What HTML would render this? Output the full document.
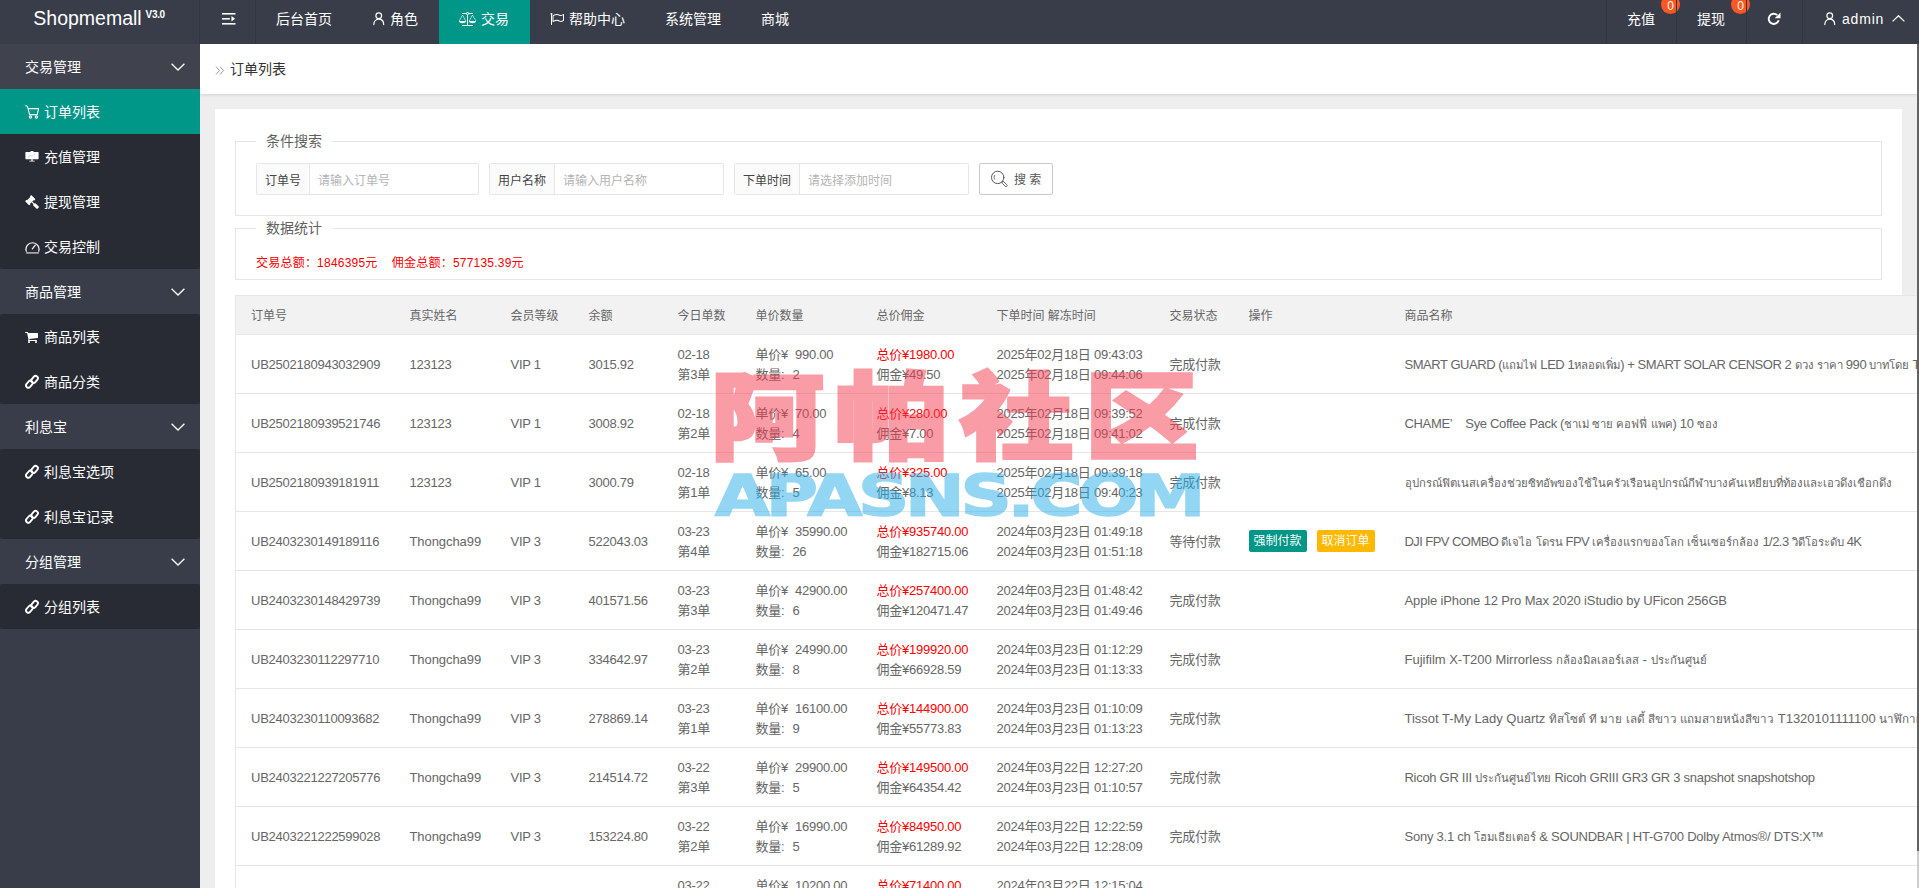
<!DOCTYPE html>
<html lang="zh-CN">
<head>
<meta charset="utf-8">
<title>Shopmemall</title>
<style>
*{box-sizing:border-box;margin:0;padding:0}
html,body{width:1919px;height:888px;overflow:hidden}
body{position:relative;background:#eeeeee;color:#333;font-family:"Liberation Sans","Noto Sans CJK SC",sans-serif;font-size:14px;line-height:24px}
svg{display:block}
/* header */
#hd{position:absolute;left:0;top:0;width:1919px;height:44px;background:#393d49;color:#fff;z-index:10}
#logo{position:absolute;left:0;top:0;width:200px;padding-left:33.300px;height:44px;text-align:left;white-space:nowrap;line-height:37px;font-size:19.5px;color:#fff;letter-spacing:0}
#logo sup{font-size:10px;letter-spacing:-.35px;position:relative;top:-.300px;font-weight:bold;vertical-align:top;line-height:30px;display:inline-block;margin-left:-1.500px}
.nv{position:absolute;top:0;height:44px;line-height:38px;font-size:14px;color:#fff;white-space:nowrap}
.nv svg{position:absolute}
.nv.on{background:#009688}
.vl{position:absolute;top:0;width:1px;height:44px;background:#323642}
.bdg{position:absolute;top:-5px;width:19px;height:19px;border-radius:10px;background:#ff5722;color:#fff;font-size:12px;line-height:22px;text-align:center}
/* side */
#sd{position:absolute;left:0;top:44px;width:200px;height:844px;background:#393d49;color:#fff}
.sg{position:relative;height:45px;line-height:47px;padding-left:25px;font-size:14px;color:#fff}
.sg svg{position:absolute;left:171px;top:19.300px}
.sc{background:#282b33;border-radius:2px}
.si{position:relative;height:45px;line-height:47px;padding-left:44px;font-size:14px;color:#fff}
.si.on{background:#009688}

/* breadcrumb */
#bc{position:absolute;left:200px;top:44px;width:1717px;height:50px;background:#fff;box-shadow:0 1px 3px rgba(0,0,0,.12);font-size:14px;line-height:51px;color:#333}
#bc span{position:absolute;left:30px;top:0}
#bc svg{position:absolute;left:15px;top:21.800px}
/* card */
#cd{position:absolute;left:215px;top:109px;width:1687px;height:800px;background:#fff}
.fs{position:absolute;left:235px;width:1647px;border:1px solid #e6e6e6}
.lg{position:absolute;left:20px;top:-13px;height:24px;line-height:25px;padding:0 10px;background:#fff;font-size:14px;color:#606060}
.ig{position:absolute;top:163px;height:32px;border:1px solid #e6e6e6;border-radius:2px;background:#fff;font-size:12px;line-height:34px}
.ig b{position:absolute;left:0;top:0;height:30px;font-weight:normal;background:#fbfbfb;border-right:1px solid #e6e6e6;padding:0 8px;color:#444}
.ig i{position:absolute;top:0;font-style:normal;color:#b4b4b4}
#sb{position:absolute;left:979px;top:163px;width:74px;height:32px;border:1px solid #c9c9c9;border-radius:2px;background:#fff;font-size:12px;line-height:32px;color:#555}
#st{position:absolute;left:256px;top:251px;font-size:12px;line-height:24px;letter-spacing:.22px;color:#ff0000;white-space:pre}
/* table */
#tb{position:absolute;left:235px;top:295px;border-collapse:collapse;table-layout:fixed;width:1900px;background:#fff;color:#666;font-size:13px}
#tb th,#tb td{border:1px solid #e6e6e6;border-left:0;border-right:0;padding:10px 15px 8px;letter-spacing:-.25px;line-height:20px;text-align:left;font-weight:normal;white-space:nowrap;overflow:hidden;vertical-align:middle;height:59px}
#tb th{background:#f2f2f2;height:39px;font-size:12px;letter-spacing:0}
#tb{border-left:1px solid #e6e6e6}
#tb .r{color:#ff0000}
.bt{display:inline-block;position:relative;top:-1px;height:22px;line-height:22px;padding:0 5px;font-size:12px;letter-spacing:0;color:#fff;border-radius:2px;vertical-align:middle}
.g1{display:inline-block;width:7px}.g2{display:inline-block;width:8px}
#tb td.th{letter-spacing:-.12px}
.t{font-size:11.3px;letter-spacing:0}
#tb td.n{letter-spacing:-.07px}
/* watermark */
#wm1{position:absolute;left:710px;top:336px;font-family:"Noto Sans CJK SC",sans-serif;font-weight:900;font-size:95px;line-height:150px;letter-spacing:9px;color:#f53c50;-webkit-text-stroke:3px #f53c50;opacity:.5;transform:scaleX(1.2);transform-origin:0 0;white-space:nowrap;z-index:5}
#wm2{position:absolute;left:715px;top:452px;font-family:"DejaVu Sans","Liberation Sans",sans-serif;font-weight:bold;font-size:57.5px;line-height:90px;letter-spacing:-3.5px;color:#28afeb;-webkit-text-stroke:1.5px #28afeb;opacity:.5;transform:scaleX(1.24);transform-origin:0 0;white-space:nowrap;z-index:5}
/* scrollbar */
#sbr{position:absolute;left:1917px;top:44px;width:2px;height:844px;background:#cdcdcd;z-index:20}
#sbr div{width:2px;height:806.500px;background:#636363}
</style>
</head>
<body>
<div id="cd"></div>
<div id="bc"><svg width="9" height="9" viewBox="0 0 9 9" fill="none" stroke="#999" stroke-width="1"><path d="M1 0.5 4.5 4.5 1 8.5M5 0.5 8.5 4.5 5 8.5"/></svg><span>订单列表</span></div>

<div class="fs" style="top:141px;height:75px"><div class="lg">条件搜索</div></div>
<div class="fs" style="top:228px;height:52px"><div class="lg">数据统计</div></div>
<div class="ig" style="left:256px;width:223px"><b>订单号</b><i style="left:61px">请输入订单号</i></div>
<div class="ig" style="left:489px;width:235px"><b>用户名称</b><i style="left:73px">请输入用户名称</i></div>
<div class="ig" style="left:734px;width:235px"><b>下单时间</b><i style="left:73px">请选择添加时间</i></div>
<div id="sb"><svg style="position:absolute;left:10px;top:6px" width="18" height="17" viewBox="0 0 18 17" fill="none" stroke="#555" stroke-width="1" stroke-linecap="round"><circle cx="7.700" cy="7.400" r="6.200"/><path d="M4.600 5.300A3.400 3.400 0 0 0 4.600 9.300" stroke-width=".8"/><rect x="-1.100" y="0" width="2.200" height="6.400" rx="1.100" transform="translate(12.300 11.800) rotate(-45)" stroke-width=".9"/></svg><span style="position:absolute;left:34px;top:0">搜 索</span></div>
<div id="st">交易总额：1846395元    佣金总额：577135.39元</div>

<table id="tb">
<colgroup><col style="width:159px"><col style="width:101px"><col style="width:78px"><col style="width:89px"><col style="width:78px"><col style="width:121px"><col style="width:120px"><col style="width:173px"><col style="width:79px"><col style="width:156px"><col></colgroup>
<tr><th>订单号</th><th>真实姓名</th><th>会员等级</th><th>余额</th><th>今日单数</th><th>单价数量</th><th>总价佣金</th><th>下单时间 解冻时间</th><th>交易状态</th><th>操作</th><th>商品名称</th></tr>
<tr><td>UB2502180943032909</td><td>123123</td><td>VIP 1</td><td>3015.92</td><td>02-18<br>第3单</td><td>单价¥<span class="g1"></span>990.00<br>数量:<span class="g2"></span>2</td><td><span class="r">总价¥1980.00</span><br>佣金¥49.50</td><td>2025年02月18日 09:43:03<br>2025年02月18日 09:44:06</td><td>完成付款</td><td></td><td class="th" style="letter-spacing:-0.45px">SMART GUARD (<span class="t">แถมไฟ</span> LED 1<span class="t">หลอดเพิ่ม</span>) + SMART SOLAR CENSOR 2 <span class="t">ดวง ราคา</span> 990 <span class="t">บาทโดย</span> TV Direct</td></tr>
<tr><td>UB2502180939521746</td><td>123123</td><td>VIP 1</td><td>3008.92</td><td>02-18<br>第2单</td><td>单价¥<span class="g1"></span>70.00<br>数量:<span class="g2"></span>4</td><td><span class="r">总价¥280.00</span><br>佣金¥7.00</td><td>2025年02月18日 09:39:52<br>2025年02月18日 09:41:02</td><td>完成付款</td><td></td><td class="th" style="letter-spacing:-0.338px">CHAME’<span style="display:inline-block;width:13px"></span>Sye Coffee Pack (<span class="t">ชาเม่ ซาย คอฟฟี่ แพค</span>) 10 <span class="t">ซอง</span></td></tr>
<tr><td>UB2502180939181911</td><td>123123</td><td>VIP 1</td><td>3000.79</td><td>02-18<br>第1单</td><td>单价¥<span class="g1"></span>65.00<br>数量:<span class="g2"></span>5</td><td><span class="r">总价¥325.00</span><br>佣金¥8.13</td><td>2025年02月18日 09:39:18<br>2025年02月18日 09:40:23</td><td>完成付款</td><td></td><td class="th"><span class="t">อุปกรณ์ฟิตเนสเครื่องช่วยซิทอัพของใช้ในครัวเรือนอุปกรณ์กีฬาบางคันเหยียบที่ท้องและเอวดึงเชือกดึง</span></td></tr>
<tr><td>UB2403230149189116</td><td class="n">Thongcha99</td><td>VIP 3</td><td>522043.03</td><td>03-23<br>第4单</td><td>单价¥<span class="g1"></span>35990.00<br>数量:<span class="g2"></span>26</td><td><span class="r">总价¥935740.00</span><br>佣金¥182715.06</td><td>2024年03月23日 01:49:18<br>2024年03月23日 01:51:18</td><td>等待付款</td><td><span class="bt" style="background:#009688">强制付款</span><span class="bt" style="background:#ffb800;margin-left:10px">取消订单</span></td><td class="th" style="letter-spacing:-0.56px">DJI FPV COMBO <span class="t">ดีเจไอ โดรน</span> FPV <span class="t">เครื่องแรกของโลก เซ็นเซอร์กล้อง</span> 1/2.3 <span class="t">วิดีโอระดับ</span> 4K</td></tr>
<tr><td>UB2403230148429739</td><td class="n">Thongcha99</td><td>VIP 3</td><td>401571.56</td><td>03-23<br>第3单</td><td>单价¥<span class="g1"></span>42900.00<br>数量:<span class="g2"></span>6</td><td><span class="r">总价¥257400.00</span><br>佣金¥120471.47</td><td>2024年03月23日 01:48:42<br>2024年03月23日 01:49:46</td><td>完成付款</td><td></td><td class="th" style="letter-spacing:-0.137px">Apple iPhone 12 Pro Max 2020 iStudio by UFicon 256GB</td></tr>
<tr><td>UB2403230112297710</td><td class="n">Thongcha99</td><td>VIP 3</td><td>334642.97</td><td>03-23<br>第2单</td><td>单价¥<span class="g1"></span>24990.00<br>数量:<span class="g2"></span>8</td><td><span class="r">总价¥199920.00</span><br>佣金¥66928.59</td><td>2024年03月23日 01:12:29<br>2024年03月23日 01:13:33</td><td>完成付款</td><td></td><td class="th" style="letter-spacing:-0.008px">Fujifilm X-T200 Mirrorless <span class="t">กล้องมิลเลอร์เลส</span> - <span class="t">ประกันศูนย์</span></td></tr>
<tr><td>UB2403230110093682</td><td class="n">Thongcha99</td><td>VIP 3</td><td>278869.14</td><td>03-23<br>第1单</td><td>单价¥<span class="g1"></span>16100.00<br>数量:<span class="g2"></span>9</td><td><span class="r">总价¥144900.00</span><br>佣金¥55773.83</td><td>2024年03月23日 01:10:09<br>2024年03月23日 01:13:23</td><td>完成付款</td><td></td><td class="th" style="letter-spacing:0">Tissot T-My Lady Quartz <span class="t" style="font-size:11.600px">ทิสโซต์ ที มาย เลดี้ สีขาว แถมสายหนังสีขาว</span> T1320101111100 <span class="t" style="font-size:11.600px">นาฬิกาผู้หญิง</span></td></tr>
<tr><td>UB2403221227205776</td><td class="n">Thongcha99</td><td>VIP 3</td><td>214514.72</td><td>03-22<br>第3单</td><td>单价¥<span class="g1"></span>29900.00<br>数量:<span class="g2"></span>5</td><td><span class="r">总价¥149500.00</span><br>佣金¥64354.42</td><td>2024年03月22日 12:27:20<br>2024年03月23日 01:10:57</td><td>完成付款</td><td></td><td class="th" style="letter-spacing:-0.288px">Ricoh GR III <span class="t">ประกันศูนย์ไทย</span> Ricoh GRIII GR3 GR 3 snapshot snapshotshop</td></tr>
<tr><td>UB2403221222599028</td><td class="n">Thongcha99</td><td>VIP 3</td><td>153224.80</td><td>03-22<br>第2单</td><td>单价¥<span class="g1"></span>16990.00<br>数量:<span class="g2"></span>5</td><td><span class="r">总价¥84950.00</span><br>佣金¥61289.92</td><td>2024年03月22日 12:22:59<br>2024年03月22日 12:28:09</td><td>完成付款</td><td></td><td class="th" style="letter-spacing:-0.238px">Sony 3.1 ch <span class="t">โฮมเธียเตอร์</span> &amp; SOUNDBAR | HT-G700 Dolby Atmos®/ DTS:X™</td></tr>
<tr><td>UB2403221215046351</td><td class="n">Thongcha99</td><td>VIP 3</td><td>91934.88</td><td>03-22<br>第1单</td><td>单价¥<span class="g1"></span>10200.00<br>数量:<span class="g2"></span>7</td><td><span class="r">总价¥71400.00</span><br>佣金¥30645.04</td><td>2024年03月22日 12:15:04<br>2024年03月22日 12:20:31</td><td>完成付款</td><td></td><td class="th"><span class="t">กล้องฟิล์ม</span> Instax Mini 11</td></tr>
</table>

<div id="wm1">阿帕社区</div>
<div id="wm2">APASNS.COM</div>

<div id="sd">
<div class="sg" style="background:#40424e">交易管理<svg class="cv" width="14" height="8" viewBox="0 0 14 8" fill="none" stroke="#fff" stroke-width="1.300"><path d="M0.600 0.700 7 7 13.400 0.700"/></svg></div>
<div class="sc"><div class="si on"><svg style="position:absolute;left:25px;top:16px" width="15" height="14" viewBox="0 0 15 14" fill="none" stroke="#fff" stroke-width="1.1" stroke-linejoin="round" stroke-linecap="round"><path d="M0.6 0.8 2.4 1.2 4.6 9.6H12.2L13.6 3.6H3.2"/><circle cx="5.4" cy="12" r="1.1"/><circle cx="11.4" cy="12" r="1.1"/></svg>订单列表</div><div class="si"><svg style="position:absolute;left:25px;top:17px" width="14" height="11" viewBox="0 0 14 11"><path fill="#fff" d="M5.5 0h3v1H13a.6.6 0 0 1 .6.6V7.6A.6.6 0 0 1 13 8.2H7.6v1.5h2v.9h-5.2v-.9h2V8.2H1A.6.6 0 0 1 .4 7.600V1.600A.6.6 0 0 1 1 1h4.500z"/><path d="M3 6.200 5.200 4.400 7 5.200 10.600 2.800" fill="none" stroke="#c9cbd0" stroke-width=".7"/></svg>充值管理</div><div class="si"><svg style="position:absolute;left:25px;top:15.5px;overflow:visible" width="14" height="14" viewBox="0 0 1792 1792"><path fill="#fff" transform="translate(0,1536) scale(1,-1)" d="M1771 0Q1771 -53 1734 -90L1627 -198Q1588 -235 1536 -235Q1483 -235 1446 -198L1083 166Q1045 202 1045 256Q1045 309 1088 352L832 608L706 482Q692 468 672.0 468.0Q652 468 638 482Q640 480 650.5 470.0Q661 460 663.0 457.0Q665 454 673.0 445.5Q681 437 683.0 432.0Q685 427 689.0 418.5Q693 410 694.5 402.0Q696 394 696 384Q696 346 668 316Q665 313 651.5 298.0Q638 283 632.5 277.5Q627 272 614.0 261.0Q601 250 592.0 245.5Q583 241 570.0 236.5Q557 232 544 232Q504 232 476 260L68 668Q40 696 40 736Q40 749 44.5 762.0Q49 775 53.5 784.0Q58 793 69.0 806.0Q80 819 85.5 824.5Q91 830 106.0 843.5Q121 857 124 860Q154 888 192 888Q202 888 210.0 886.5Q218 885 226.5 881.0Q235 877 240.0 875.0Q245 873 253.5 865.0Q262 857 265.0 855.0Q268 853 278.0 842.5Q288 832 290 830Q276 844 276.0 864.0Q276 884 290 898L638 1246Q652 1260 672.0 1260.0Q692 1260 706 1246Q704 1248 693.5 1258.0Q683 1268 681.0 1271.0Q679 1274 671.0 1282.5Q663 1291 661.0 1296.0Q659 1301 655.0 1309.5Q651 1318 649.5 1326.0Q648 1334 648 1344Q648 1382 676 1412Q679 1415 692.5 1430.0Q706 1445 711.5 1450.5Q717 1456 730.0 1467.0Q743 1478 752.0 1482.5Q761 1487 774.0 1491.5Q787 1496 800 1496Q840 1496 868 1468L1276 1060Q1304 1032 1304 992Q1304 979 1299.5 966.0Q1295 953 1290.5 944.0Q1286 935 1275.0 922.0Q1264 909 1258.5 903.5Q1253 898 1238.0 884.5Q1223 871 1220 868Q1190 840 1152 840Q1142 840 1134.0 841.5Q1126 843 1117.5 847.0Q1109 851 1104.0 853.0Q1099 855 1090.5 863.0Q1082 871 1079.0 873.0Q1076 875 1066.0 885.5Q1056 896 1054 898Q1068 884 1068.0 864.0Q1068 844 1054 830L928 704L1184 448Q1227 491 1280 491Q1332 491 1371 454L1734 91Q1771 52 1771 0Z"/></svg>提现管理</div><div class="si"><svg style="position:absolute;left:25px;top:15.500px" width="15" height="14" viewBox="0 0 15 14" fill="none" stroke="#fff" stroke-width="1.200" stroke-linecap="round"><path d="M1.300 11.200A6.500 6.500 0 1 1 13.700 11.200"/><path d="M7.300 8.800 10.300 5.200"/><path d="M1.100 12.900H13.900" stroke="#c5c6cb" stroke-width="1.400" stroke-linecap="butt"/></svg>交易控制</div></div>
<div class="sg">商品管理<svg class="cv" width="14" height="8" viewBox="0 0 14 8" fill="none" stroke="#fff" stroke-width="1.300"><path d="M0.600 0.700 7 7 13.400 0.700"/></svg></div>
<div class="sc"><div class="si"><svg style="position:absolute;left:25px;top:15.5px;overflow:visible" width="14" height="14" viewBox="0 0 1792 1792"><path fill="#fff" transform="translate(0,1536) scale(1,-1)" d="M602.0 90.0Q640 52 640.0 0.0Q640 -52 602.0 -90.0Q564 -128 512.0 -128.0Q460 -128 422.0 -90.0Q384 -52 384.0 0.0Q384 52 422.0 90.0Q460 128 512.0 128.0Q564 128 602.0 90.0ZM1498.0 90.0Q1536 52 1536.0 0.0Q1536 -52 1498.0 -90.0Q1460 -128 1408.0 -128.0Q1356 -128 1318.0 -90.0Q1280 -52 1280.0 0.0Q1280 52 1318.0 90.0Q1356 128 1408.0 128.0Q1460 128 1498.0 90.0ZM1664 1088V576Q1664 552 1647.5 533.5Q1631 515 1607 512L563 390Q576 330 576 320Q576 304 552 256H1472Q1498 256 1517.0 237.0Q1536 218 1536.0 192.0Q1536 166 1517.0 147.0Q1498 128 1472 128H448Q422 128 403.0 147.0Q384 166 384 192Q384 203 392.0 223.5Q400 244 408.0 259.5Q416 275 429.5 299.5Q443 324 445 329L268 1152H64Q38 1152 19.0 1171.0Q0 1190 0.0 1216.0Q0 1242 19.0 1261.0Q38 1280 64 1280H320Q336 1280 348.5 1273.5Q361 1267 368.0 1258.0Q375 1249 381.0 1233.5Q387 1218 389.0 1207.5Q391 1197 394.5 1178.0Q398 1159 399 1152H1600Q1626 1152 1645.0 1133.0Q1664 1114 1664 1088Z"/></svg>商品列表</div><div class="si"><svg style="position:absolute;left:24px;top:14.800px" width="16" height="16" viewBox="0 0 16 16" fill="none" stroke="#fff" stroke-width="1.900"><rect x="-3.900" y="-2.300" width="7.800" height="4.600" rx="2.300" transform="translate(10.600 5.400) rotate(-50)"/><rect x="-3.900" y="-2.300" width="7.800" height="4.600" rx="2.300" transform="translate(5.400 10.200) rotate(-50)"/></svg>商品分类</div></div>
<div class="sg">利息宝<svg class="cv" width="14" height="8" viewBox="0 0 14 8" fill="none" stroke="#fff" stroke-width="1.300"><path d="M0.600 0.700 7 7 13.400 0.700"/></svg></div>
<div class="sc"><div class="si"><svg style="position:absolute;left:24px;top:14.800px" width="16" height="16" viewBox="0 0 16 16" fill="none" stroke="#fff" stroke-width="1.900"><rect x="-3.900" y="-2.300" width="7.800" height="4.600" rx="2.300" transform="translate(10.600 5.400) rotate(-50)"/><rect x="-3.900" y="-2.300" width="7.800" height="4.600" rx="2.300" transform="translate(5.400 10.200) rotate(-50)"/></svg>利息宝选项</div><div class="si"><svg style="position:absolute;left:24px;top:14.800px" width="16" height="16" viewBox="0 0 16 16" fill="none" stroke="#fff" stroke-width="1.900"><rect x="-3.900" y="-2.300" width="7.800" height="4.600" rx="2.300" transform="translate(10.600 5.400) rotate(-50)"/><rect x="-3.900" y="-2.300" width="7.800" height="4.600" rx="2.300" transform="translate(5.400 10.200) rotate(-50)"/></svg>利息宝记录</div></div>
<div class="sg">分组管理<svg class="cv" width="14" height="8" viewBox="0 0 14 8" fill="none" stroke="#fff" stroke-width="1.300"><path d="M0.600 0.700 7 7 13.400 0.700"/></svg></div>
<div class="sc"><div class="si"><svg style="position:absolute;left:24px;top:14.800px" width="16" height="16" viewBox="0 0 16 16" fill="none" stroke="#fff" stroke-width="1.900"><rect x="-3.900" y="-2.300" width="7.800" height="4.600" rx="2.300" transform="translate(10.600 5.400) rotate(-50)"/><rect x="-3.900" y="-2.300" width="7.800" height="4.600" rx="2.300" transform="translate(5.400 10.200) rotate(-50)"/></svg>分组列表</div></div>
</div>
<div id="hd">
<div id="logo">Shopmemall <sup>V3.0</sup></div>
<div class="vl" style="left:199px"></div>
<div class="nv" style="left:200px;width:55px"><svg style="left:22px;top:13px" width="13.500" height="11.600" viewBox="0 0 14 12" fill="#fff"><rect x="0" y="0" width="14" height="1.600"/><rect x="0" y="5.200" width="8.200" height="1.600"/><rect x="0" y="10.400" width="14" height="1.600"/><path d="M9.800 3.200 13.600 6 9.800 8.800z"/></svg></div>
<div class="vl" style="left:255px"></div>
<div class="nv" style="left:256px;width:96px"><span style="position:absolute;left:20px;top:0">后台首页</span></div>
<div class="nv" style="left:352px;width:87px"><svg style="left:21px;top:12.300px" width="11.500" height="13.300" viewBox="0 0 12 14" fill="none" stroke="#fff" stroke-width="1.25" stroke-linecap="round"><circle cx="6" cy="4" r="3"/><path d="M0.800 13.200C0.800 9.600 3 7.600 6 7.600S11.200 9.600 11.200 13.200"/></svg><span style="position:absolute;left:38px;top:0">角色</span></div>
<div class="nv on" style="left:439px;width:91px"><svg style="position:absolute;left:20px;top:12px;overflow:visible" width="14" height="14" viewBox="0 0 1792 1792"><path fill="#fff" transform="translate(0,1536) scale(1,-1)" d="M1728 1088 1344 384H2112ZM448 1088 64 384H832ZM1269 1280Q1255 1240 1223.5 1208.5Q1192 1177 1152 1163V-128H1760Q1774 -128 1783.0 -137.0Q1792 -146 1792 -160V-224Q1792 -238 1783.0 -247.0Q1774 -256 1760 -256H416Q402 -256 393.0 -247.0Q384 -238 384 -224V-160Q384 -146 393.0 -137.0Q402 -128 416 -128H1024V1163Q984 1177 952.5 1208.5Q921 1240 907 1280H416Q402 1280 393.0 1289.0Q384 1298 384 1312V1376Q384 1390 393.0 1399.0Q402 1408 416 1408H907Q928 1465 977.0 1500.5Q1026 1536 1088.0 1536.0Q1150 1536 1199.0 1500.5Q1248 1465 1269 1408H1760Q1774 1408 1783.0 1399.0Q1792 1390 1792 1376V1312Q1792 1298 1783.0 1289.0Q1774 1280 1760 1280ZM1031.5 1287.5Q1055 1264 1088.0 1264.0Q1121 1264 1144.5 1287.5Q1168 1311 1168.0 1344.0Q1168 1377 1144.5 1400.5Q1121 1424 1088.0 1424.0Q1055 1424 1031.5 1400.5Q1008 1377 1008.0 1344.0Q1008 1311 1031.5 1287.5ZM2176 384Q2176 311 2129.5 253.0Q2083 195 2012.0 162.0Q1941 129 1867.5 112.5Q1794 96 1728.0 96.0Q1662 96 1588.5 112.5Q1515 129 1444.0 162.0Q1373 195 1326.5 253.0Q1280 311 1280 384Q1280 395 1315.0 465.0Q1350 535 1407.0 639.5Q1464 744 1514.0 835.0Q1564 926 1616.0 1019.0Q1668 1112 1672 1119Q1690 1152 1728.0 1152.0Q1766 1152 1784 1119Q1788 1112 1840.0 1019.0Q1892 926 1942.0 835.0Q1992 744 2049.0 639.5Q2106 535 2141.0 465.0Q2176 395 2176 384ZM896 384Q896 311 849.5 253.0Q803 195 732.0 162.0Q661 129 587.5 112.5Q514 96 448.0 96.0Q382 96 308.5 112.5Q235 129 164.0 162.0Q93 195 46.5 253.0Q0 311 0 384Q0 395 35.0 465.0Q70 535 127.0 639.5Q184 744 234.0 835.0Q284 926 336.0 1019.0Q388 1112 392 1119Q410 1152 448.0 1152.0Q486 1152 504 1119Q508 1112 560.0 1019.0Q612 926 662.0 835.0Q712 744 769.0 639.5Q826 535 861.0 465.0Q896 395 896 384Z"/></svg><span style="position:absolute;left:42px;top:0">交易</span></div>
<div class="nv" style="left:530px;width:115px"><svg style="position:absolute;left:20px;top:12px;overflow:visible" width="14" height="14" viewBox="0 0 1792 1792"><path fill="#fff" transform="translate(0,1536) scale(1,-1)" d="M1664 491V1107Q1495 1016 1358 1016Q1276 1016 1213 1048Q1113 1097 1029.0 1124.5Q945 1152 851 1152Q678 1152 448 1025V426Q693 539 881 539Q936 539 984.5 531.5Q1033 524 1082.5 505.5Q1132 487 1159.5 474.5Q1187 462 1242 435L1270 421Q1314 399 1371 399Q1491 399 1664 491ZM320 1280Q320 1245 302.5 1216.0Q285 1187 256 1170V-96Q256 -110 247.0 -119.0Q238 -128 224 -128H160Q146 -128 137.0 -119.0Q128 -110 128 -96V1170Q99 1187 81.5 1216.0Q64 1245 64 1280Q64 1333 101.5 1370.5Q139 1408 192.0 1408.0Q245 1408 282.5 1370.5Q320 1333 320 1280ZM1792 1216V453Q1792 414 1757 396Q1747 391 1740 387Q1522 271 1371 271Q1283 271 1213 306L1185 320Q1121 353 1086.0 368.0Q1051 383 995.0 397.0Q939 411 881 411Q779 411 645.5 367.0Q512 323 417 265Q402 256 384 256Q368 256 352 264Q320 283 320 320V1062Q320 1097 351 1117Q386 1138 429.5 1159.5Q473 1181 543.5 1211.5Q614 1242 696.0 1261.0Q778 1280 851 1280Q963 1280 1060.0 1249.0Q1157 1218 1269 1163Q1307 1144 1358 1144Q1480 1144 1668 1256Q1690 1268 1699 1273Q1730 1289 1761 1271Q1792 1251 1792 1216Z"/></svg><span style="position:absolute;left:39px;top:0">帮助中心</span></div>
<div class="nv" style="left:645px;width:96px"><span style="position:absolute;left:20px;top:0">系统管理</span></div>
<div class="nv" style="left:741px;width:68px"><span style="position:absolute;left:20px;top:0">商城</span></div>
<div class="vl" style="left:1606px"></div>
<div class="nv" style="left:1607px;width:70px"><span style="position:absolute;left:20px;top:0">充值</span><div class="bdg" style="left:54px">0</div></div>
<div class="vl" style="left:1676px"></div>
<div class="nv" style="left:1677px;width:70px"><span style="position:absolute;left:20px;top:0">提现</span><div class="bdg" style="left:54px">0</div></div>
<div class="vl" style="left:1746px"></div>
<div class="nv" style="left:1747px;width:56px"><svg style="left:20px;top:11.5px" width="14" height="14" viewBox="0 0 14 14" fill="none"><path d="M11.700 8.300A5.100 5.100 0 1 1 10.300 3.100" stroke="#fff" stroke-width="1.900"/><path fill="#fff" d="M13.500 0.400V6.200H7.700z"/></svg></div>
<div class="vl" style="left:1802px"></div>
<div class="nv" style="left:1803px;width:114px"><svg style="left:21px;top:12.300px" width="11.500" height="13.300" viewBox="0 0 12 14" fill="none" stroke="#fff" stroke-width="1.25" stroke-linecap="round"><circle cx="6" cy="4" r="3"/><path d="M0.800 13.200C0.800 9.600 3 7.600 6 7.600S11.200 9.600 11.200 13.200"/></svg><span style="position:absolute;left:39px;top:0;letter-spacing:.8px">admin</span><svg style="left:89px;top:15px" width="13" height="7" viewBox="0 0 13 7" fill="none" stroke="#fff" stroke-width="1.200"><path d="M0.600 6.400 6.500 0.700 12.400 6.400"/></svg></div>
</div>
<div id="sbr"><div></div></div>
</body>
</html>
